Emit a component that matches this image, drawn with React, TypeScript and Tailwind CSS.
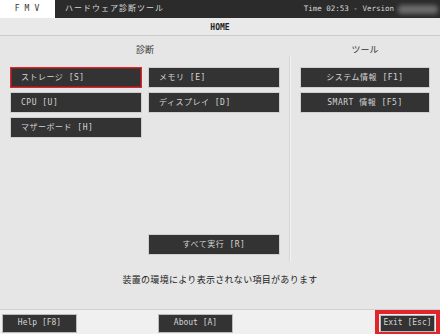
import React from "react";

const font = { fontFamily: '"DejaVu Sans Mono", "Noto Sans CJK JP", monospace' };

function Btn({ label, active, center }: { label: string; active?: boolean; center?: boolean }) {
    return (
        <div
            className={`h-[21px] flex items-center bg-[#333333] text-[#d4d4d4] text-[8px] tracking-[0.5px] border ${active ? "border-[#e0262b] shadow-[inset_0_0_0_1px_#7a2a2c]" : "border-[#cfcfcf]"} ${center ? "justify-center" : "pl-[10px]"}`}
        >
            {label}
        </div>
    );
}

export default function App() {
    return (
        <div className="w-[440px] h-[334px] bg-[#e6e6e6] flex flex-col overflow-hidden" style={font}>
            {/* Header */}
            <div className="h-[18px] shrink-0 bg-[#2b2b2b] flex items-center text-[#d8d8d8] text-[8px]">
                <div className="w-[55px] h-full bg-white text-[#333] flex items-center justify-center tracking-[5px] pl-[4px]">
                    FMV
                </div>
                <div className="pl-[10px] tracking-[1px]">ハードウェア診断ツール</div>
                <div className="ml-auto flex items-center gap-[4px] pr-[2px]">
                    <span className="text-[7.5px]">Time 02:53 - Version</span>
                    <span className="w-[40px] h-[9px] bg-[#6a6a6a] blur-[2px] rounded" />
                </div>
            </div>

            {/* Breadcrumb */}
            <div className="h-[18px] shrink-0 bg-[#e9e9e9] border-b border-[#cccccc] flex items-center justify-center text-[8px] text-[#222] font-bold pt-[2px]">
                HOME
            </div>

            {/* Main */}
            <div className="flex h-[226px] shrink-0">
                <div className="w-[280px] pl-[10px]">
                    <div className="h-[26px] flex items-center justify-center text-[9px] text-[#333] pt-[3px]">診断</div>
                    <div className="mt-[5px] grid grid-cols-2 gap-x-[6px] gap-y-[4px]">
                        <Btn label="ストレージ [S]" active />
                        <Btn label="メモリ [E]" />
                        <Btn label="CPU [U]" />
                        <Btn label="ディスプレイ [D]" />
                        <Btn label="マザーボード [H]" />
                    </div>
                    <div className="mt-[96px] grid grid-cols-2 gap-x-[6px]">
                        <div />
                        <Btn label="すべて実行 [R]" center />
                    </div>
                </div>
                <div className="w-[20px] flex justify-center pt-[20px]">
                    <div className="w-[2px] h-[206px] bg-[#d6d6d6] border-r border-[#f2f2f2]" />
                </div>
                <div className="w-[130px]">
                    <div className="h-[26px] flex items-center justify-center text-[9px] text-[#333] pt-[3px]">ツール</div>
                    <div className="mt-[5px] flex flex-col gap-[4px]">
                        <Btn label="システム情報 [F1]" center />
                        <Btn label="SMART 情報 [F5]" center />
                    </div>
                </div>
            </div>

            {/* Notice */}
            <div className="h-[47px] shrink-0 flex justify-center text-[9px] text-[#222] pt-[12px] tracking-[0.3px]">
                装置の環境により表示されない項目があります
            </div>

            {/* Footer */}
            <div className="flex-1 bg-[#f0f0f0] border-t border-[#d0d0d0] flex items-center">
                <div className="ml-[2px] w-[75px] h-[19px] bg-[#333333] border border-[#bbbbbb] text-[#d4d4d4] text-[8px] flex items-center justify-center">
                    Help [F8]
                </div>
                <div className="ml-[81px] w-[75px] h-[19px] bg-[#333333] border border-[#bbbbbb] text-[#d4d4d4] text-[8px] flex items-center justify-center">
                    About [A]
                </div>
                <div className="ml-auto self-end h-[26px] w-[65px] shrink-0 border-[4px] border-[#e0262b] flex items-center justify-center">
                    <div className="w-[55px] h-[17px] bg-[#333333] border border-[#bbbbbb] text-[#d4d4d4] text-[8px] flex items-center justify-center">
                        Exit [Esc]
                    </div>
                </div>
            </div>
        </div>
    );
}
